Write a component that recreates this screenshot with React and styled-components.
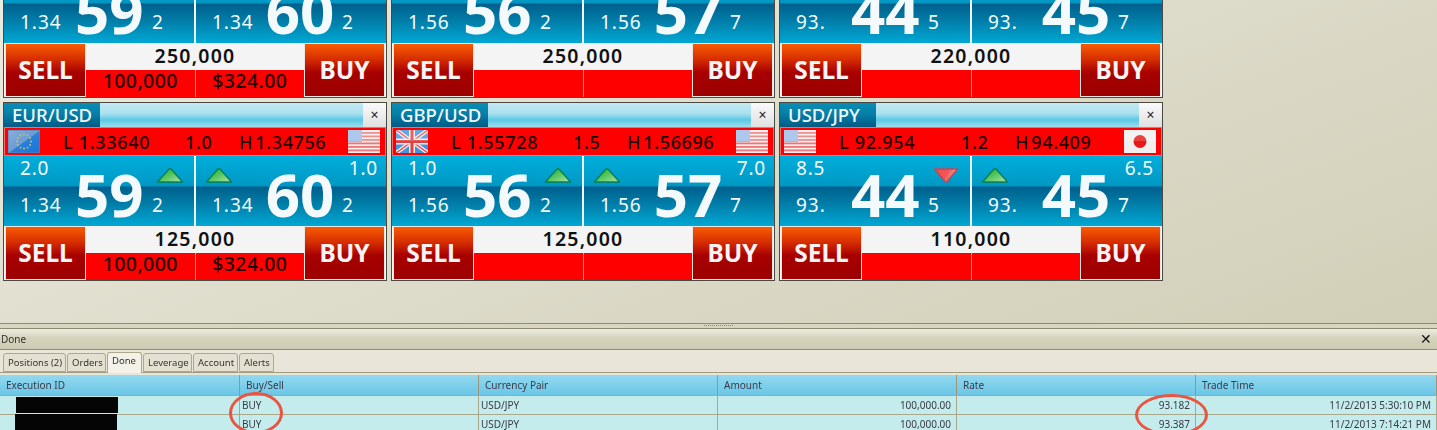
import React from "react"
import styled, { createGlobalStyle } from "styled-components"

const GlobalStyle = createGlobalStyle`
    html, body {
        margin: 0;
        padding: 0;
        overflow: hidden;
        background: #e9e6d9;
    }
    * { box-sizing: border-box; }
`
const Page = styled.div`
    position: relative;
    width: 1437px;
    height: 430px;
    overflow: hidden;
    font-family: "Noto Sans", Tahoma, sans-serif;
    filter: blur(0.3px);
`
const TradeArea = styled.div`
    height: 324px;
    overflow: hidden;
    background: linear-gradient(160deg, #ecebdf 0%, #dcdac8 55%, #d2cfb8 100%);
    border-bottom: 1px solid #8f8b6e;
`
const CardGrid = styled.div`
    display: grid;
    grid-template-columns: repeat(3, 384px);
    grid-auto-rows: 179px;
    gap: 4px;
    margin: -81px 0 0 3px;
`
const Card = styled.div`
    display: flex;
    flex-direction: column;
    border: 1px solid #4a4a44;
    background: #eee;
`
const TitleBar = styled.div`
    display: flex;
    flex-shrink: 0;
    height: 24px;
    background: linear-gradient(#c4e9f3 0%, #a8e0ef 45%, #5ac9e6 70%, #9fdcec 100%);
`
const PairTab = styled.div`
    width: 96px;
    padding-left: 8px;
    color: #f2f8fa;
    font-size: 18.5px;
    font-weight: 500;
    line-height: 24px;
    background: linear-gradient(#0a8db5 0%, #0580a8 45%, #005a85 100%);
`
const CloseBox = styled.div`
    margin-left: auto;
    width: 23px;
    font-size: 14px;
    line-height: 23px;
    text-align: center;
    color: #222;
    background: linear-gradient(#fafafa, #e0e0e0);
`
const RangeBar = styled.div`
    display: grid;
    flex-shrink: 0;
    grid-template-columns: 32px 1fr 32px;
    align-items: center;
    height: 29px;
    padding: 0 5px 0 3px;
    background: #ff0000;
    border: 1px solid #f07070;
`
const RangeText = styled.div`
    display: grid;
    grid-template-columns: 122px 54px 1fr;
    padding-left: 23px;
    color: #1a0000;
    font-size: 18px;
    font-weight: 500;
    letter-spacing: 0.7px;
    white-space: nowrap;
`
const HighText = styled.span`
    word-spacing: -3px;
    letter-spacing: 0.6px;
`
const Rates = styled.div`
    display: grid;
    flex-shrink: 0;
    grid-template-columns: 190px 190px;
    gap: 2px;
    height: 70px;
    background: #eef6f8;
`
const RateSide = styled.div`
    display: grid;
    grid-template-columns: ${p => p.$cols};
    grid-template-rows: 35px 35px;
    padding-left: 16px;
    color: #f4fafb;
    background: linear-gradient(#00aedb 0%, #0098c4 42%, #00608d 45%, #0079a4 65%, #00a8d4 100%);
`
const Change = styled.div`
    grid-column: ${p => p.$col};
    grid-row: 1;
    padding-right: ${p => p.$right}px;
    font-size: 19px;
    line-height: 24px;
    letter-spacing: 0.8px;
    text-align: ${p => p.$align};
`
const Base = styled.div`
    grid-column: ${p => p.$col};
    grid-row: 2;
    font-size: 19px;
    line-height: 28px;
    letter-spacing: 1px;
`
const BigPips = styled.div`
    grid-column: 2;
    grid-row: 1 / 3;
    font-size: 60px;
    font-weight: 700;
    line-height: 76px;
    text-align: center;
`
const Tick = styled.div`
    grid-column: ${p => p.$col};
    grid-row: 1;
    margin-left: ${p => p.$left}px;
    padding-top: 11px;
    line-height: 0;
`
const Tenth = styled.div`
    grid-column: 3;
    grid-row: 2;
    padding-left: ${p => p.$left}px;
    font-size: 19px;
    line-height: 28px;
`
const TradeRow = styled.div`
    display: grid;
    grid-template-columns: 81px 1fr 81px;
    flex: 1;
    min-height: 0;
    background: #f4f4f4;
    padding: 0 1px;
`
const TradeButton = styled.div`
    border: 1px solid #ece6e0;
    color: #f8f4f4;
    font-size: 24.5px;
    font-weight: 700;
    line-height: 51px;
    text-align: center;
    background: linear-gradient(#f85c00 0%, #d83000 28%, #a80000 55%, #9c0000 100%);
`
const Middle = styled.div`
    display: flex;
    flex-direction: column;
`
const Volume = styled.div`
    height: 27px;
    color: #111;
    font-size: 19.5px;
    font-weight: 600;
    letter-spacing: 1.2px;
    line-height: 26px;
    text-align: center;
`
const Position = styled.div`
    display: grid;
    grid-template-columns: 1fr 1fr;
    gap: 1px;
    flex: 1;
    background: #f08a8a;
`
const PositionCell = styled.div`
    color: #200;
    background: #ff0000;
    font-size: 19.5px;
    font-weight: 500;
    letter-spacing: 0.4px;
    line-height: 22px;
    text-align: center;
`
const Splitter = styled.div`
    display: flex;
    justify-content: center;
    height: 5px;
    padding-top: 1px;
    background: #d8d5c0;
    border-bottom: 1px solid #8f8b6e;
`
const GripDot = styled.span`
    width: 1px;
    height: 1px;
    margin-right: 1px;
    background: #8a876c;
`
const PanelHead = styled.div`
    display: flex;
    justify-content: space-between;
    height: 21px;
    padding: 0 5px 0 1px;
    font-size: 10px;
    line-height: 20px;
    color: #333;
    background: linear-gradient(#ecebdf 0%, #d6d3bd 45%, #cfccb4 100%);
    border-bottom: 1px solid #8f8b6e;
`
const PanelClose = styled.span`
    color: #111;
    font-size: 14px;
    line-height: 19px;
`
const TabStrip = styled.div`
    display: flex;
    align-items: flex-end;
    gap: 1px;
    height: 23px;
    margin-bottom: 2px;
    padding-left: 3px;
    background: #e9e6d9;
    border-bottom: 1px solid #a09c7e;
`
const Tab = styled.div`
    height: ${p => (p.$active ? 21 : 19)}px;
    width: ${p => p.$width}px;
    margin-bottom: ${p => (p.$active ? -1 : 0)}px;
    padding-left: 4px;
    border: 1px solid #aca88c;
    border-bottom: ${p => (p.$active ? "none" : "1px solid #aca88c")};
    border-radius: 3px 3px 0 0;
    color: #333;
    font-size: 9.5px;
    line-height: ${p => (p.$active ? 15 : 17)}px;
    background: ${p => (p.$active ? "#f4f2e8" : "#e4e1d2")};
`
const TableRow = styled.div`
    display: grid;
    grid-template-columns: 240px 239px 239px 239px 239px 241px;
    height: ${p => p.$height}px;
    background: ${p => p.$bg};
    border-bottom: 1px solid #a9a88a;
`
const HeadCell = styled.div`
    padding-left: 6px;
    border-right: 1px solid #9a9878;
    color: #3a3a4a;
    font-size: 10px;
    line-height: 20px;
`
const BodyCell = styled.div`
    position: relative;
    padding: 0 ${p => (p.$num ? 5 : 2)}px 0 ${p => (p.$num ? 0 : 2)}px;
    border-right: 1px solid #a9a88a;
    color: #3a3a44;
    font-size: 10px;
    line-height: 18px;
    text-align: ${p => (p.$num ? "right" : "left")};
`
const Redaction = styled.div`
    position: absolute;
    left: ${p => p.$left}px;
    top: ${p => p.$top}px;
    width: 102px;
    height: 16px;
    background: #050505;
`
const Circle = styled.div`
    position: absolute;
    left: ${p => p.$left}px;
    top: ${p => p.$top}px;
    width: ${p => p.$width}px;
    height: 42px;
    border: 3px solid #ea5440;
    border-radius: 50%;
`

const Arrow = ({ down }) => (
    <svg width="28" height="17" viewBox="0 0 28 17">
        <defs>
            <linearGradient id="tickDown" x1="0" y1="0" x2="1" y2="0.3">
                <stop offset="0" stopColor="#f84848" />
                <stop offset="0.6" stopColor="#f05858" />
                <stop offset="1" stopColor="#f8a8a8" />
            </linearGradient>
            <linearGradient id="tickUp" x1="0" y1="0" x2="1" y2="1">
                <stop offset="0" stopColor="#18a838" />
                <stop offset="0.5" stopColor="#58c860" />
                <stop offset="1" stopColor="#b4e4b0" />
            </linearGradient>
        </defs>
        {down ? (
            <path d="M2.5 2H25.5L14.5 15H13.5Z" fill="url(#tickDown)" stroke="#c04858" strokeWidth="1.4" strokeLinejoin="round" />
        ) : (
            <path d="M13 2H15L26.5 15H1.5Z" fill="url(#tickUp)" stroke="#0a8050" strokeWidth="1.4" strokeLinejoin="round" />
        )}
    </svg>
)

const Gloss = () => <rect width="32" height="11" fill="#fff" opacity="0.18" />

const UsFlag = () => (
    <svg width="32" height="23" viewBox="0 0 32 23">
        <rect width="32" height="23" fill="#f6eeee" />
        {[2, 5.5, 9, 12.5, 16, 19.5].map(y => (
            <rect key={y} y={y} width="32" height="1.8" fill="#e87878" />
        ))}
        <rect width="14" height="12" fill="#9cbce8" />
        <Gloss />
    </svg>
)

const EuFlag = () => (
    <svg width="32" height="23" viewBox="0 0 32 23">
        <defs>
            <linearGradient id="euBlue" x1="0" y1="0" x2="1" y2="1">
                <stop offset="0" stopColor="#88aedc" />
                <stop offset="0.5" stopColor="#6c9cd4" />
                <stop offset="0.52" stopColor="#2a80d8" />
                <stop offset="1" stopColor="#1a74d8" />
            </linearGradient>
        </defs>
        <rect width="32" height="23" fill="url(#euBlue)" stroke="#5a84b8" />
        {[...Array(12).keys()].map(i => (
            <circle
                key={i}
                cx={16 + 7 * Math.cos((i * Math.PI) / 6)}
                cy={11.5 + 7 * Math.sin((i * Math.PI) / 6)}
                r="0.9"
                fill="#c8c860"
            />
        ))}
    </svg>
)

const UkFlag = () => (
    <svg width="32" height="23" viewBox="0 0 32 23">
        <rect width="32" height="23" fill="#3f93e0" />
        <path d="M0 0L32 23M32 0L0 23" stroke="#f4e8e8" strokeWidth="4" />
        <path d="M0 0L32 23M32 0L0 23" stroke="#e04848" strokeWidth="1.4" />
        <path d="M16 0V23M0 11.5H32" stroke="#f4e8e8" strokeWidth="6" />
        <path d="M16 0V23M0 11.5H32" stroke="#e04040" strokeWidth="3" />
        <Gloss />
    </svg>
)

const JpFlag = () => (
    <svg width="32" height="23" viewBox="0 0 32 23">
        <rect width="32" height="23" fill="#f2eeee" />
        <circle cx="16" cy="11.5" r="6.5" fill="#e81818" />
        <Gloss />
    </svg>
)

const flags = { EUR: EuFlag, GBP: UkFlag, USD: UsFlag, JPY: JpFlag }

const pairs = [
    {
        pair: "EUR/USD",
        low: "L 1.33640", spread: "1.0", high: "H 1.34756",
        sellChange: "2.0", buyChange: "1.0", sellBase: "1.34", buyBase: "1.34",
        sell: "59", sellTenth: "2", buy: "60", buyTenth: "2",
        sellDown: false, pos: "100,000", pnl: "$324.00", top: "250,000", bottom: "125,000",
    },
    {
        pair: "GBP/USD",
        low: "L 1.55728", spread: "1.5", high: "H 1.56696",
        sellChange: "1.0", buyChange: "7.0", sellBase: "1.56", buyBase: "1.56",
        sell: "56", sellTenth: "2", buy: "57", buyTenth: "7",
        sellDown: false, pos: "", pnl: "", top: "250,000", bottom: "125,000",
    },
    {
        pair: "USD/JPY",
        low: "L 92.954", spread: "1.2", high: "H 94.409",
        sellChange: "8.5", buyChange: "6.5", sellBase: "93.", buyBase: "93.",
        sell: "44", sellTenth: "5", buy: "45", buyTenth: "7",
        sellDown: true, pos: "", pnl: "", top: "220,000", bottom: "110,000",
    },
]

const QuoteCard = ({ data, volume }) => {
    const [base, quote] = data.pair.split("/")
    const BaseFlag = flags[base]
    const QuoteFlag = flags[quote]
    return (
        <Card>
            <TitleBar>
                <PairTab>{data.pair}</PairTab>
                <CloseBox>×</CloseBox>
            </TitleBar>
            <RangeBar>
                <BaseFlag />
                <RangeText>
                    <span>{data.low}</span>
                    <span>{data.spread}</span>
                    <HighText>{data.high}</HighText>
                </RangeText>
                <QuoteFlag />
            </RangeBar>
            <Rates>
                <RateSide $cols="55px 67px 1fr">
                    <Change $col={1} $right={0} $align="left">{data.sellChange}</Change>
                    <Base $col={1}>{data.sellBase}</Base>
                    <BigPips>{data.sell}</BigPips>
                    <Tick $col={3} $left={14}><Arrow down={data.sellDown} /></Tick>
                    <Tenth $left={10}>{data.sellTenth}</Tenth>
                </RateSide>
                <RateSide $cols="52px 72px 1fr">
                    <Tick $col={1} $left={-7}><Arrow /></Tick>
                    <Base $col={1}>{data.buyBase}</Base>
                    <BigPips>{data.buy}</BigPips>
                    <Change $col={3} $right={8} $align="right">{data.buyChange}</Change>
                    <Tenth $left={6}>{data.buyTenth}</Tenth>
                </RateSide>
            </Rates>
            <TradeRow>
                <TradeButton>SELL</TradeButton>
                <Middle>
                    <Volume>{volume}</Volume>
                    <Position>
                        <PositionCell>{data.pos}</PositionCell>
                        <PositionCell>{data.pnl}</PositionCell>
                    </Position>
                </Middle>
                <TradeButton>BUY</TradeButton>
            </TradeRow>
        </Card>
    )
}

const tabs = [
    { label: "Positions (2)", width: 63 },
    { label: "Orders", width: 39 },
    { label: "Done", width: 35, active: true },
    { label: "Leverage", width: 49 },
    { label: "Account", width: 45 },
    { label: "Alerts", width: 35 },
]

const columns = ["Execution ID", "Buy/Sell", "Currency Pair", "Amount", "Rate", "Trade Time"]

const trades = [
    { side: "BUY", pair: "USD/JPY", amount: "100,000.00", rate: "93.182", time: "11/2/2013 5:30:10 PM", barLeft: 16, barTop: 1 },
    { side: "BUY", pair: "USD/JPY", amount: "100,000.00", rate: "93.387", time: "11/2/2013 7:14:21 PM", barLeft: 15, barTop: -1 },
]

const App = () => {
    return (
        <Page>
            <GlobalStyle />
            <TradeArea>
                <CardGrid>
                    {pairs.map(p => <QuoteCard key={p.pair + "top"} data={p} volume={p.top} />)}
                    {pairs.map(p => <QuoteCard key={p.pair} data={p} volume={p.bottom} />)}
                </CardGrid>
            </TradeArea>
            <Splitter>
                {[...Array(15).keys()].map(i => <GripDot key={i} />)}
            </Splitter>
            <PanelHead>
                <span>Done</span>
                <PanelClose>✕</PanelClose>
            </PanelHead>
            <TabStrip>
                {tabs.map(t => <Tab key={t.label} $width={t.width} $active={t.active}>{t.label}</Tab>)}
            </TabStrip>
            <TableRow $height={21} $bg="linear-gradient(#92d9ef, #6bc6e6)">
                {columns.map(c => <HeadCell key={c}>{c}</HeadCell>)}
            </TableRow>
            {trades.map(t => (
                <TableRow key={t.time} $height={19} $bg="#c4ecec">
                    <BodyCell><Redaction $left={t.barLeft} $top={t.barTop} /></BodyCell>
                    <BodyCell>{t.side}</BodyCell>
                    <BodyCell>{t.pair}</BodyCell>
                    <BodyCell $num>{t.amount}</BodyCell>
                    <BodyCell $num>{t.rate}</BodyCell>
                    <BodyCell $num>{t.time}</BodyCell>
                </TableRow>
            ))}
            <Circle $left={229} $top={392} $width={54} />
            <Circle $left={1135} $top={394} $width={73} />
        </Page>
    )
}

export default App
